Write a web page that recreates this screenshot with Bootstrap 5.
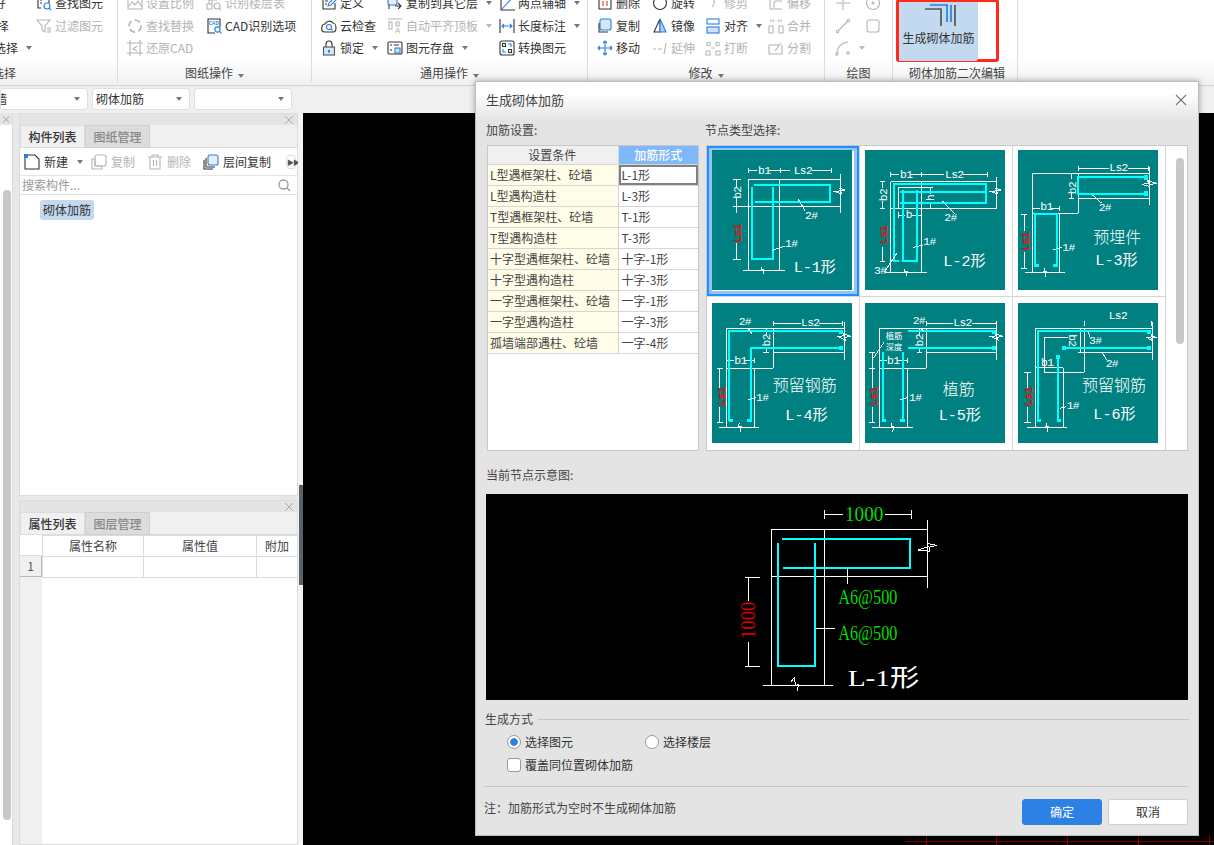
<!DOCTYPE html>
<html lang="zh-CN">
<head>
<meta charset="UTF-8">
<title>生成砌体加筋</title>
<link href="https://cdn.jsdelivr.net/npm/bootstrap@5.3.0/dist/css/bootstrap.min.css" rel="stylesheet">
<style>
html,body{height:845px;overflow:hidden}
body{font:12px/18px "Noto Sans CJK SC","Liberation Sans",sans-serif;color:#333;background:#e8e8e8;width:1214px;position:relative}
.ic{width:16px;height:16px;flex:none;fill:none;stroke:currentColor;stroke-width:1.1}
.arrow-d{display:inline-block;width:0;height:0;border:3.5px solid transparent;border-top:4px solid #777;border-bottom:0;margin-left:5px;flex:none}

/* ribbon */
.rb-bar{height:86px;background:linear-gradient(#fff 70%,#f0f0f0);border-bottom:1px solid #d5d5d5;overflow:hidden}
.rb-group{height:82px;border-right:1px solid #dcdcdc;flex:none;overflow:hidden}
.rb-rows{display:grid;grid-auto-rows:22.5px;margin-top:-8px;height:67.5px;grid-auto-flow:column;grid-template-rows:repeat(3,22.5px)}
.rb-item{display:flex;align-items:center;gap:3px;white-space:nowrap;color:#333}
.rb-off,.rb-off .ic{color:#b4b4b4}
.rb-off .arrow-d{border-top-color:#bbb}
.rb-title{margin-top:auto;height:18px;line-height:18px;text-align:center;color:#444;white-space:nowrap}
.g1{width:118px}.g1 .rb-rows{grid-template-columns:36px auto;margin-left:-6px}
.g1 .rb-rows>.rb-item:nth-child(n+4){margin-left:6px}
.g2{width:194px}.g2 .rb-rows{grid-template-columns:79px auto;padding-left:9px}
.g3{width:276px}.g3 .rb-rows{grid-template-columns:66px 112px auto;padding-left:9px}
.g4{width:237px}.g4 .rb-rows{grid-template-columns:55px 53px 63px auto;padding-left:9px}
.g5{width:68px}.g5 .rb-rows{grid-template-columns:30px auto;padding-left:10px}
.g6{width:125px;padding-left:3px}
.gen-frame{width:103px;height:63px;border:3px solid #ff2a1a;border-radius:3px;margin-top:-1px}
.gen-btn{width:79px;height:59px;background:#c3d9f0;border-radius:0 0 3px 0;text-align:center;color:#333;padding-top:2px}
.gen-btn svg{display:block;width:36px;height:24px;margin:0 auto 1px;fill:none;stroke-width:1.7}
.g6 .rb-title{text-align:left;padding-left:13px}
.g1 .rb-title{text-align:left;margin-left:-8px}

/* combos */
.combo-row{height:27px;background:#f0f0f0;padding-top:2px;gap:4px}
.combo{height:22px;width:98px;background:#fff;border:1px solid #e0e0e0;border-radius:3px;padding:0 7px 0 3px;flex:none}
.combo-first{width:88px;padding-left:0;overflow:hidden}
.combo-first span:first-child{margin-left:-6px}

/* left panels */
.main-area{height:732px}
.side-sliver{width:13px;background:#fff;border-right:1px solid #ddd;position:relative;flex:none}
.sliver-head{height:12px;background:#e6e6e6;color:#aaa;font-size:11px;line-height:12px;text-align:center}
.sliver-bar{position:absolute;left:3px;top:77px;width:8px;height:630px;background:#c8c8c8;border-radius:4px}
.side-col{width:279px;margin-left:6px;flex:none}
.dock{background:#fff;border:1px solid #dcdcdc}
.dock-top{height:383px}
.dock-bottom{height:345px;margin-top:4px}
.dock-head{height:11px;background:#e4e4e4;display:flex;justify-content:end;align-items:center;padding-right:4px;color:#aaa}
.dock-head svg{width:8px;height:8px;stroke:#aaa;fill:none}
.dock-tabs{height:23px;background:#f0f0f0;border-bottom:1px solid #dcdcdc;flex-wrap:nowrap}
.dock-tabs .nav-link{height:23px;width:65px;padding:0;text-align:center;line-height:21px;font-size:12px;color:#888;background:#dcdcdc;border:1px solid #cfcfcf;border-radius:0;font-weight:500}
.dock-tabs .nav-link.active{color:#333;background:#f0f0f0;border-color:#dcdcdc}
.dock-tools{height:28px;border-bottom:1px solid #e6e6e6;padding-left:4px;white-space:nowrap}
.dock-tools .rb-item{gap:4px}
.tool-gap{margin-left:12px}
.tool-gap-first{margin-left:8px}
.more-btn{width:10px;height:14px;margin-left:auto;margin-right:1px;border:1px solid #e0e0e0;border-radius:3px;font-size:7px;line-height:12px;text-align:center;color:#555;letter-spacing:-1px}
.search-row{height:19px;border-bottom:1px solid #e0e0e0;color:#999;padding:0 6px 0 2px}
.search-row svg{width:13px;height:13px;stroke:#999;fill:none;stroke-width:1.3}
.tree-chip{display:inline-block;margin:5px 0 0 20px;padding:0 3px;height:20px;line-height:20px;background:#c3d9f0;border-radius:3px}
.prop-wrap{position:relative;height:309px;align-items:flex-start}
.prop-side{width:22px;height:100%;background:#f0f0f0;flex:none}
.prop-table{width:255px;table-layout:fixed;margin:0;--bs-table-border-color:#dcdcdc;color:#444}
.prop-table th,.prop-table td{padding:0;height:21px;font-weight:400;text-align:center;font-size:12px;line-height:18px;border:1px solid #dcdcdc;vertical-align:middle}
.prop-c1{width:101px}.prop-c2{width:113px}.prop-c3{width:41px}
.prop-num{position:absolute;left:0;top:21px;width:22px;height:21px;line-height:20px;text-align:center;border-right:1px solid #bbb;border-bottom:1px solid #bbb;background:#f0f0f0;color:#555}
.prop-corner{position:absolute;left:0;top:0;width:22px;height:21px;background:#fff;border-bottom:1px solid #dcdcdc}
.dock-gap{width:5px;background:#f4f4f4;flex:none}
.cad-area{background:#000;flex:1;position:relative}
.split-handle{position:absolute;left:299px;top:485px;width:4px;height:100px;background:#5a6068}
.cad-grid{position:absolute;right:0;bottom:0;width:309px;height:10px;stroke:#8a0000;fill:none;shape-rendering:crispEdges}

/* dialog */
.dlg{position:absolute;left:475px;top:81px;width:724px;height:755px;background:#e4e4e4;border:1px solid #bdbdbd;box-shadow:0 0 6px rgba(0,0,0,.35)}
.dlg-head{height:39px;background:linear-gradient(#fff 30%,#e4e4e4);padding:0 11px 3px 10px;font-size:13px;color:#444}
.dlg-head svg{width:12px;height:12px;stroke:#777;fill:none;stroke-width:1.1}
.dlg-body{padding:0 10px 0 11px}
.lbl-row{height:24px;gap:7px;color:#444}
.lbl-row div:first-child{width:212px;margin-left:-1px}
.cfg-row{height:306px;gap:7px}
.cond-box{width:212px;height:306px;background:#fff;border:1px solid #c8c8c8;flex:none}
.cond-table{width:210px;table-layout:fixed;margin:0;border-collapse:collapse}
.cond-table th,.cond-table td{padding:0 3px;height:21px;font-size:12px;line-height:18px;border:1px solid #d6d6d6;font-weight:400;white-space:nowrap;vertical-align:middle;color:#444;background:#fff;box-shadow:none}
.cond-table tr>:first-child{border-left:0;width:130px;padding-left:2px}
.cond-table tr>:last-child{border-right:0}
.cond-table tr:first-child>*{border-top:0;height:18px;text-align:center;line-height:17px}
.cond-table th:first-child{background:#f0f0f0}
.cond-table th:last-child{background:#7fb8fb;color:#fff;font-weight:500}
.cond-table td:first-child{background:#fffde8}
.cond-table td.cell-on{box-shadow:inset 0 0 0 2px #808080}
.node-box{width:482px;height:306px;background:#fff;border:1px solid #c8c8c8;flex:none;position:relative}
.node-grid{display:grid;grid-template-columns:repeat(3,153px);grid-template-rows:151px 153px}
.node-cell{padding:4px 0 0 5px;border-right:1px solid #d6d6d6;border-bottom:1px solid #d6d6d6}
.node-grid .node-cell:nth-child(n+4){padding-top:6px;border-bottom:0}
.node-on{box-shadow:inset 0 0 0 2px #1e90ff,inset 0 0 0 5px #92c5f9}
.thumb{display:block;width:140px;height:140px;background:#008080}
.ln{stroke:#fff;stroke-width:3;fill:none;shape-rendering:crispEdges}
.rbr{stroke:#0ff;stroke-width:6;fill:none;shape-rendering:crispEdges}
.rbs{fill:#0ff;shape-rendering:crispEdges}
.tw{fill:#fff;font:34px "Liberation Mono","Noto Sans CJK SC",monospace;letter-spacing:-2px}
.tb{fill:#fff;font:46px "Liberation Mono","Noto Sans CJK SC",monospace}
.tc{fill:#fff;font:48px "Noto Sans CJK SC",sans-serif;font-weight:300}
.ts{fill:#fff;font:25px "Noto Sans CJK SC",sans-serif}
.tr{fill:#f00;font:bold 34px "Liberation Mono",monospace;letter-spacing:-2px}
.node-track{position:absolute;left:459px;top:0;width:21px;height:304px;background:#fff}
.node-thumbbar{position:absolute;left:10px;top:12px;width:8px;height:186px;background:#c8c8c8;border-radius:4px}
.cap-row{height:43px;padding-top:15px;color:#444;margin-left:-1px}
.draw-box{display:block;width:702px;height:206px;background:#000;margin-left:-1px}
.dr-w{stroke:#fff;stroke-width:3;fill:none;shape-rendering:crispEdges}
.dr-c{stroke:#0ff;stroke-width:6;fill:none;shape-rendering:crispEdges}
.dr-g{fill:#0d0;font:62px "Liberation Serif",serif}
.dr-g2{fill:#0d0;font:60px "Liberation Serif",serif}
.dr-r{fill:#d00;font:62px "Liberation Serif",serif}
.dr-t{fill:#fff;font:72px "Liberation Serif","Noto Sans CJK SC",serif}
.mode-head{margin-top:10px;height:18px;gap:5px;margin-left:-2px;color:#444}
.mode-head i{flex:1;height:1px;background:#c6c6c6;margin-right:-1px}
.mode-opt{height:18px;padding-left:20px;margin-top:5px;color:#333}
.mode-opt .form-check{margin:0;padding:0;min-height:0;display:flex;align-items:center;gap:4px;line-height:18px}
.mode-opt .form-check-input{float:none;margin:0;width:14px;height:14px;border:1px solid #999;flex:none}
.mode-opt .form-check-input:checked{background:#fff radial-gradient(circle,#2b7fe0 0 3.5px,transparent 4px);border-color:#999}
.mode-gap{width:72px}
.dlg-rule{height:1px;background:#c6c6c6;margin:12px 0 0 -3px}
.dlg-foot{margin:12px 0 0 -3px;align-items:start;color:#444}
.dlg-btn{width:80px;height:26px;padding:0;font-size:12px;border-radius:3px;line-height:24px}
.dlg-ok{background:#2e81e4;border:1px solid #2e81e4;color:#fff}
.dlg-no{background:#fff;border:1px solid #cfcfcf;color:#333;margin-left:6px}
.blue{color:#2b7fe0}
</style>
</head>
<body>
<svg width="0" height="0" class="position-absolute">
  <symbol id="i-find" viewBox="0 0 16 16"><path d="M5 13H2V2h11v6"/><path d="M4 5h2M4 8h2"/><circle cx="11" cy="11" r="3" stroke="#2b7fe0"/><path d="M13 13l2 2" stroke="#2b7fe0"/></symbol>
  <symbol id="i-filter" viewBox="0 0 16 16"><path d="M1 2h13L9 8v6L6 12V8z"/><path d="M11 10h4M11 12h4M11 14h4"/></symbol>
  <symbol id="i-ratio" viewBox="0 0 16 16"><path d="M1 14V3h14v11z"/><path d="M1 12l4-5 3 3 3-4 4 6"/></symbol>
  <symbol id="i-floor" viewBox="0 0 16 16"><path d="M1 14V9h5v5zM6 9V5h5M3 9V5h3"/><circle cx="11" cy="11" r="3"/><path d="M13 13l2 2"/></symbol>
  <symbol id="i-replace" viewBox="0 0 16 16"><circle cx="8" cy="8" r="6" stroke-width="1.6" stroke-dasharray="6 3"/></symbol>
  <symbol id="i-cadopt" viewBox="0 0 16 16"><path d="M9 15H2V1h12v8"/><text x="2.800" y="7" font-size="4.600" font-family="Liberation Sans" fill="#2b7fe0" stroke="none" font-weight="700">CAD</text><circle cx="11.500" cy="11.500" r="2.600" stroke="#2b7fe0"/><path d="M13.400 13.400l2 2" stroke="#2b7fe0"/></symbol>
  <symbol id="i-restore" viewBox="0 0 16 16"><path d="M3 0v16M13 0v16M0 3h16M0 13h16"/><path d="M10 6L6 9l4 2"/></symbol>
  <symbol id="i-define" viewBox="0 0 16 16"><path d="M14 8v6H2V2h7"/><path d="M4 6h3M4 9h2"/><path d="M7 11l1-3 6-6 2 2-6 6z" stroke="#2b7fe0"/></symbol>
  <symbol id="i-cloud" viewBox="0 0 16 16"><path d="M4 14C1 14 0 12 1 9c0-2 2-3 3-3 1-3 6-4 8-1 2 0 3 3 3 5 0 3-1 4-3 4z"/><circle cx="8" cy="9" r="2.500" stroke="#2b7fe0"/><path d="M10 11l1.500 1.500" stroke="#2b7fe0"/></symbol>
  <symbol id="i-lock" viewBox="0 0 16 16"><path d="M5 7V4a3 3 0 0 1 6 0v3"/><rect x="2.500" y="7" width="11" height="8" fill="#d3e5f8" stroke="#555"/><path d="M8 10v2.500" stroke="#2b7fe0" stroke-width="2"/></symbol>
  <symbol id="i-copyfloor" viewBox="0 0 16 16"><path d="M2 14V4a2 2 0 0 1 2-2h8"/><rect x="1" y="1" width="9" height="9" rx="2" stroke="#2b7fe0" fill="#e6f0fb"/><path d="M11 8l3 3-3 3M14 11H8"/></symbol>
  <symbol id="i-stack" viewBox="0 0 16 16"><path d="M3 4v9h9M1 6v9h9"/><rect x="5" y="1" width="10" height="10" rx="2" fill="#e6f0fb" stroke="#2b7fe0"/></symbol>
  <symbol id="i-copyoff" viewBox="0 0 16 16"><path d="M1 5h3v7h7v3H1z"/><rect x="4" y="1" width="11" height="11" rx="2"/></symbol>
  <symbol id="i-autoalign" viewBox="0 0 16 16"><path d="M1 1h14M2 4v7h3V4zM9 4v4h3V4z"/><text x="8" y="15" font-size="8" font-family="Liberation Sans" fill="currentColor" stroke="none">A</text></symbol>
  <symbol id="i-save" viewBox="0 0 16 16"><rect x="1" y="2" width="14" height="12" rx="1"/><path d="M3 5h2M7 5h5M3 10h2"/><rect x="8" y="8" width="5" height="5" fill="#cfe2f7" stroke="#2b7fe0"/></symbol>
  <symbol id="i-axis" viewBox="0 0 16 16"><path d="M2 1v14h14"/><path d="M3 14L13 3" stroke="#2b7fe0"/></symbol>
  <symbol id="i-dim" viewBox="0 0 16 16"><path d="M1 1v14M15 1v14"/><path d="M3 8h10M5 6L3 8l2 2M11 6l2 2-2 2" stroke="#2b7fe0"/></symbol>
  <symbol id="i-conv" viewBox="0 0 16 16"><rect x="1" y="1" width="14" height="14" rx="2"/><rect x="3.500" y="3.500" width="3" height="3"/><path d="M9 4h3v3M4 9v3h3" stroke="#2b7fe0"/><rect x="9.500" y="9.500" width="3" height="3"/></symbol>
  <symbol id="i-del" viewBox="0 0 16 16"><path d="M2 3h12v11H2z"/><path d="M6 6v5M10 6v5" stroke="#d33"/></symbol>
  <symbol id="i-rotate" viewBox="0 0 16 16"><circle cx="8" cy="8" r="6.500"/></symbol>
  <symbol id="i-copy" viewBox="0 0 16 16"><rect x="3" y="1" width="11" height="11" rx="2" fill="#d8e7f8" stroke="#2b7fe0"/><path d="M2 5v9h9"/></symbol>
  <symbol id="i-mirror" viewBox="0 0 16 16"><path d="M8 1L2 14h6z"/><path d="M8 1l6 13H8z" fill="#a9cdf3" stroke="#2b7fe0"/></symbol>
  <symbol id="i-move" viewBox="0 0 16 16"><path d="M8 1v14M1 8h14M6 3l2-2 2 2M6 13l2 2 2-2M3 6L1 8l2 2M13 6l2 2-2 2" stroke="#2b7fe0"/></symbol>
  <symbol id="i-trim" viewBox="0 0 16 16"><path d="M1 4h6M10 4h5M9 2v7M7 12l2-3"/></symbol>
  <symbol id="i-extend" viewBox="0 0 16 16"><path d="M1 9h3M6 9h4M14 3l-2 11"/></symbol>
  <symbol id="i-align" viewBox="0 0 16 16"><rect x="2" y="1" width="12" height="5" stroke="#2b7fe0"/><rect x="2" y="9" width="12" height="6" fill="#cfe2f7" stroke="#2b7fe0"/></symbol>
  <symbol id="i-break" viewBox="0 0 16 16"><circle cx="3.500" cy="4" r="1.800"/><circle cx="12.500" cy="4" r="1.800"/><path d="M1 15v-4h4v4zM11 15v-4h4v4zM6 8h4"/></symbol>
  <symbol id="i-offset" viewBox="0 0 16 16"><path d="M2 14V6a4 4 0 0 1 4-4h8M6 13V8a2 2 0 0 1 2-2h6"/><path d="M2 14h12"/></symbol>
  <symbol id="i-merge" viewBox="0 0 16 16"><path d="M3 1v3M13 1v3M5 2l1 2M11 2l-1 2"/><path d="M1 15V8h4v7zM11 15V8h4v7z"/></symbol>
  <symbol id="i-split" viewBox="0 0 16 16"><path d="M1 5h10M14 5v9H1V5"/><path d="M7 11l6-8"/></symbol>
  <symbol id="i-pt" viewBox="0 0 16 16"><path d="M8 1v5M8 10v5M1 8h5M10 8h5"/><circle cx="8" cy="8" r="1.200"/></symbol>
  <symbol id="i-circle" viewBox="0 0 16 16"><circle cx="8" cy="8" r="6.500"/><circle cx="8" cy="8" r="1"/></symbol>
  <symbol id="i-line" viewBox="0 0 16 16"><path d="M3 13L13 3"/><circle cx="2.500" cy="13.500" r="1.300"/><circle cx="13.500" cy="2.500" r="1.300"/></symbol>
  <symbol id="i-rect" viewBox="0 0 16 16"><rect x="2" y="2" width="12" height="12" rx="2"/></symbol>
  <symbol id="i-arc" viewBox="0 0 16 16"><path d="M2 14C2 7 6 3 13 2"/><circle cx="2" cy="14" r="1.200"/><circle cx="13" cy="13" r="1.200"/></symbol>
  <symbol id="i-new" viewBox="0 0 16 16"><path d="M4 1h7l4 4v10H1V4"/><rect x="0" y="0" width="4" height="4" fill="#2b7fe0" stroke="none"/></symbol>
  <symbol id="i-trash" viewBox="0 0 16 16"><path d="M1 3h14M5 3V1h6v2M3 3v12h10V3M6.500 6v6M9.500 6v6"/></symbol>
</svg>

<!-- ribbon -->
<div class="rb-bar d-flex">
  <div class="rb-group g1 d-flex flex-column">
    <div class="rb-rows">
      <div class="rb-item">好</div>
      <div class="rb-item"><span>&nbsp;择</span></div>
      <div class="rb-item">选择<span class="arrow-d"></span></div>
      <div class="rb-item"><svg class="ic"><use href="#i-find"/></svg>查找图元</div>
      <div class="rb-item rb-off"><svg class="ic"><use href="#i-filter"/></svg>过滤图元</div>
      <div class="rb-item"></div>
    </div>
    <div class="rb-title">选择</div>
  </div>
  <div class="rb-group g2 d-flex flex-column">
    <div class="rb-rows">
      <div class="rb-item rb-off"><svg class="ic"><use href="#i-ratio"/></svg>设置比例</div>
      <div class="rb-item rb-off"><svg class="ic"><use href="#i-replace"/></svg>查找替换</div>
      <div class="rb-item rb-off"><svg class="ic"><use href="#i-restore"/></svg>还原CAD</div>
      <div class="rb-item rb-off"><svg class="ic"><use href="#i-floor"/></svg>识别楼层表</div>
      <div class="rb-item"><svg class="ic"><use href="#i-cadopt"/></svg>CAD识别选项</div>
      <div class="rb-item"></div>
    </div>
    <div class="rb-title">图纸操作<span class="arrow-d"></span></div>
  </div>
  <div class="rb-group g3 d-flex flex-column">
    <div class="rb-rows">
      <div class="rb-item"><svg class="ic"><use href="#i-define"/></svg>定义</div>
      <div class="rb-item"><svg class="ic"><use href="#i-cloud"/></svg>云检查</div>
      <div class="rb-item"><svg class="ic"><use href="#i-lock"/></svg>锁定<span class="arrow-d"></span></div>
      <div class="rb-item"><svg class="ic"><use href="#i-copyfloor"/></svg>复制到其它层<span class="arrow-d"></span></div>
      <div class="rb-item rb-off"><svg class="ic"><use href="#i-autoalign"/></svg>自动平齐顶板<span class="arrow-d"></span></div>
      <div class="rb-item"><svg class="ic"><use href="#i-save"/></svg>图元存盘<span class="arrow-d"></span></div>
      <div class="rb-item"><svg class="ic"><use href="#i-axis"/></svg>两点辅轴<span class="arrow-d"></span></div>
      <div class="rb-item"><svg class="ic"><use href="#i-dim"/></svg>长度标注<span class="arrow-d"></span></div>
      <div class="rb-item"><svg class="ic"><use href="#i-conv"/></svg>转换图元</div>
    </div>
    <div class="rb-title">通用操作<span class="arrow-d"></span></div>
  </div>
  <div class="rb-group g4 d-flex flex-column">
    <div class="rb-rows">
      <div class="rb-item"><svg class="ic"><use href="#i-del"/></svg>删除</div>
      <div class="rb-item"><svg class="ic"><use href="#i-copy"/></svg>复制</div>
      <div class="rb-item"><svg class="ic blue"><use href="#i-move"/></svg>移动</div>
      <div class="rb-item"><svg class="ic"><use href="#i-rotate"/></svg>旋转</div>
      <div class="rb-item"><svg class="ic"><use href="#i-mirror"/></svg>镜像</div>
      <div class="rb-item rb-off"><svg class="ic"><use href="#i-extend"/></svg>延伸</div>
      <div class="rb-item rb-off"><svg class="ic"><use href="#i-trim"/></svg>修剪</div>
      <div class="rb-item"><svg class="ic"><use href="#i-align"/></svg>对齐<span class="arrow-d"></span></div>
      <div class="rb-item rb-off"><svg class="ic"><use href="#i-break"/></svg>打断</div>
      <div class="rb-item rb-off"><svg class="ic"><use href="#i-offset"/></svg>偏移</div>
      <div class="rb-item rb-off"><svg class="ic"><use href="#i-merge"/></svg>合并</div>
      <div class="rb-item rb-off"><svg class="ic"><use href="#i-split"/></svg>分割</div>
    </div>
    <div class="rb-title">修改<span class="arrow-d"></span></div>
  </div>
  <div class="rb-group g5 d-flex flex-column">
    <div class="rb-rows">
      <div class="rb-item rb-off"><svg class="ic"><use href="#i-pt"/></svg></div>
      <div class="rb-item rb-off"><svg class="ic"><use href="#i-line"/></svg></div>
      <div class="rb-item rb-off"><svg class="ic"><use href="#i-arc"/></svg><span class="arrow-d"></span></div>
      <div class="rb-item rb-off"><svg class="ic"><use href="#i-circle"/></svg></div>
      <div class="rb-item rb-off"><svg class="ic"><use href="#i-rect"/></svg></div>
      <div class="rb-item"></div>
    </div>
    <div class="rb-title">绘图</div>
  </div>
  <div class="rb-group g6 d-flex flex-column">
    <div class="gen-frame">
      <div class="gen-btn">
        <svg viewBox="0 0 36 24"><path d="M4 5h16v17" stroke="#555"/><path d="M9 1h17v17M30 1v17" stroke="#2b7fe0"/><path d="M34 1v21" stroke="#555"/></svg>
        生成砌体加筋
      </div>
    </div>
    <div class="rb-title">砌体加筋二次编辑</div>
  </div>
</div>

<!-- combo row -->
<div class="combo-row d-flex">
  <div class="combo combo-first d-flex align-items-center justify-content-between"><span>墙</span><span class="arrow-d"></span></div>
  <div class="combo d-flex align-items-center justify-content-between"><span>砌体加筋</span><span class="arrow-d"></span></div>
  <div class="combo d-flex align-items-center justify-content-end"><span class="arrow-d"></span></div>
</div>

<!-- main area -->
<div class="main-area d-flex">
  <div class="side-sliver">
    <div class="sliver-head">×</div>
    <div class="sliver-bar"></div>
  </div>
  <div class="side-col">
    <div class="dock dock-top">
      <div class="dock-head"><svg viewBox="0 0 8 8"><path d="M0 0l8 8M8 0L0 8"/></svg></div>
      <ul class="nav dock-tabs">
        <li class="nav-item"><a class="nav-link active" href="#">构件列表</a></li>
        <li class="nav-item"><a class="nav-link" href="#">图纸管理</a></li>
      </ul>
      <div class="dock-tools d-flex align-items-center">
        <div class="rb-item"><svg class="ic"><use href="#i-new"/></svg>新建<span class="arrow-d"></span></div>
        <div class="rb-item rb-off tool-gap-first"><svg class="ic"><use href="#i-copyoff"/></svg>复制</div>
        <div class="rb-item rb-off tool-gap"><svg class="ic"><use href="#i-trash"/></svg>删除</div>
        <div class="rb-item tool-gap"><svg class="ic"><use href="#i-stack"/></svg>层间复制</div>
        <div class="more-btn">▶▶</div>
      </div>
      <div class="search-row d-flex align-items-center justify-content-between">
        <span>搜索构件...</span>
        <svg viewBox="0 0 13 13"><circle cx="5.500" cy="5.500" r="4.500"/><path d="M9 9l3 3"/></svg>
      </div>
      <span class="tree-chip">砌体加筋</span>
    </div>
    <div class="dock dock-bottom">
      <div class="dock-head"><svg viewBox="0 0 8 8"><path d="M0 0l8 8M8 0L0 8"/></svg></div>
      <ul class="nav dock-tabs">
        <li class="nav-item"><a class="nav-link active" href="#">属性列表</a></li>
        <li class="nav-item"><a class="nav-link" href="#">图层管理</a></li>
      </ul>
      <div class="d-flex prop-wrap">
        <div class="prop-side"></div>
        <table class="table prop-table">
          <colgroup><col class="prop-c1"><col class="prop-c2"><col class="prop-c3"></colgroup>
          <tr><th>属性名称</th><th>属性值</th><th>附加</th></tr>
          <tr><td>&nbsp;</td><td></td><td></td></tr>
        </table>
        <div class="prop-corner"></div>
        <div class="prop-num">1</div>
      </div>
    </div>
  </div>
  <div class="dock-gap"></div>
  <div class="cad-area">
    <svg class="cad-grid" viewBox="0 0 309 10"><path d="M0 6h309M21 0v10M91 0v10M162 0v10M233 0v10M304 0v10"/></svg>
  </div>
</div>
<div class="split-handle"></div>

<!-- dialog -->
<div class="dlg">
  <div class="dlg-head d-flex align-items-center justify-content-between">
    <span>生成砌体加筋</span>
    <svg viewBox="0 0 12 12"><path d="M1 1l10 10M11 1L1 11"/></svg>
  </div>
  <div class="dlg-body">
    <div class="lbl-row d-flex"><div>加筋设置:</div><div>节点类型选择:</div></div>
    <div class="cfg-row d-flex">
      <div class="cond-box">
        <table class="table cond-table">
          <tr><th>设置条件</th><th>加筋形式</th></tr>
          <tr><td>L型遇框架柱、砼墙</td><td class="cell-on">L-1形</td></tr>
          <tr><td>L型遇构造柱</td><td>L-3形</td></tr>
          <tr><td>T型遇框架柱、砼墙</td><td>T-1形</td></tr>
          <tr><td>T型遇构造柱</td><td>T-3形</td></tr>
          <tr><td>十字型遇框架柱、砼墙</td><td>十字-1形</td></tr>
          <tr><td>十字型遇构造柱</td><td>十字-3形</td></tr>
          <tr><td>一字型遇框架柱、砼墙</td><td>一字-1形</td></tr>
          <tr><td>一字型遇构造柱</td><td>一字-3形</td></tr>
          <tr><td>孤墙端部遇柱、砼墙</td><td>一字-4形</td></tr>
        </table>
      </div>
      <div class="node-box">
        <div class="node-grid">
          <div class="node-cell node-on">
            <svg class="thumb" viewBox="36 30 420 420">
              <path class="ln" d="M146 84v16M240 84v16M395 84v16M146 92h26M208 92h62M335 92h60M146 118h276M422 103v117M100 200h322M146 118v274M238 118v274M130 392h125M110 118v26M110 172v46M110 310v48M100 118h22M100 200h22M100 358h22"/>
              <path class="ln" d="M406 155l16-3-4-8 18 6-14 3 2 8zM185 380l-2 10 8-1-2 13"/>
              <path class="rbr" d="M162 134h228v51H165M157 142v214h63V142"/>
              <path class="ln" d="M295 178l20 34M215 332l40-14"/>
              <text class="tw" x="174" y="102">b1</text><text class="tw" x="281" y="102">Ls2</text>
              <text class="tw" x="315" y="236">2#</text><text class="tw" x="255" y="320">1#</text>
              <text class="tw" text-anchor="middle" transform="rotate(-90 122 158)" x="122" y="158">b2</text>
              <text class="tr" text-anchor="middle" transform="rotate(-90 122 280)" x="122" y="280">Ls1</text>
              <text class="tb" x="281" y="396" textLength="127" lengthAdjust="spacingAndGlyphs">L-1形</text>
            </svg>
          </div>
          <div class="node-cell">
            <svg class="thumb" viewBox="495 30 420 420">
              <path class="ln" d="M572 95v16M665 95v16M862 95v16M572 103h26M632 103h100M790 103h72M572 125h318M890 110v95M572 205h318M572 125v273M665 125v273M595 142v63M595 142h100M690 142v20M690 186v19M682 142h16M682 205h16M595 225h20M636 225h29M595 217v16M555 398h125M548 125v20M548 182v24M548 320v45M540 125h16M540 205h16M540 365h16"/>
              <path class="ln" d="M874 155l16-3-4-8 18 6-14 3 2 8zM615 386l-2 10 8-1-2 13"/>
              <path class="rbr" d="M596 362h-14V133h276v22H600M858 155v35H600M610 150v212h40V150"/>
              <path class="ln" d="M592 338l-38 56M640 322l28-7M727 183l38 39"/>
              <text class="tw" x="600" y="113">b1</text><text class="tw" x="735" y="113">Ls2</text>
              <text class="tw" x="617" y="235">b</text>
              <text class="tw" text-anchor="middle" transform="rotate(-90 702 174)" x="702" y="174">h</text>
              <text class="tw" text-anchor="middle" transform="rotate(-90 562 165)" x="562" y="165">b2</text>
              <text class="tr" text-anchor="middle" transform="rotate(-90 562 285)" x="562" y="285">Ls1</text>
              <text class="tw" x="522" y="402">3#</text><text class="tw" x="670" y="316">1#</text><text class="tw" x="733" y="244">2#</text>
              <text class="tb" x="730" y="378" textLength="127" lengthAdjust="spacingAndGlyphs">L-2形</text>
            </svg>
          </div>
          <div class="node-cell">
            <svg class="thumb" viewBox="24 30 420 420">
              <path class="ln" d="M205 78v14M415 78v14M205 85h93M353 85h62M67 100h351M205 100v120M67 220h138M67 100v296M148 220v176M205 175h213M418 80v115M185 100v18M185 160v15M177 100h16M177 175h16M67 197v16M148 197v16M67 205h22M122 205h26M34 222h18M42 222v50M42 335v50M34 385h18M45 396h120"/>
              <path class="ln" d="M395 133l22-3-5-8 28 8-22 4 2 6zM104 384l-3 12 8-1-3 16"/>
              <path class="rbr" d="M413 110H205v52h208M75 380V222h67v158"/>
              <path class="rbs" d="M403 106h10v14h-10zM403 154h10v14h-10zM72 372h14v10H72zM129 372h14v10h-14z"/>
              <path class="ln" d="M248 165l27 25M130 330l25-8"/>
              <text class="tw" x="298" y="94">Ls2</text><text class="tw" x="91" y="210">b1</text>
              <text class="tw" text-anchor="middle" transform="rotate(-90 197 144)" x="197" y="144">b2</text>
              <text class="tr" text-anchor="middle" transform="rotate(-90 57 305)" x="57" y="305">Ls1</text>
              <text class="tw" x="266" y="212">2#</text><text class="tw" x="157" y="332">1#</text>
              <text class="tc" x="250" y="308">预埋件</text>
              <text class="tb" x="256" y="376" textLength="127" lengthAdjust="spacingAndGlyphs">L-3形</text>
            </svg>
          </div>
          <div class="node-cell">
            <svg class="thumb" viewBox="36 24 420 420">
              <path class="ln" d="M220 78v14M428 78v14M220 85h82M356 85h72M80 100h352M80 100v296M220 100v120M80 220h140M163 220v176M220 172h212M432 80v115M198 100v20M198 155v17M190 172h16M80 197h22M134 197h29M163 189v16M50 220h18M58 220v58M58 335v47M50 382h18M58 396h120"/>
              <path class="ln" d="M415 125l17-3-4-6 24 8-18 3 2 8zM118 384l-3 12 8-1-3 16"/>
              <path class="rbr" d="M430 108H88v270M430 160H153v218"/>
              <path class="rbs" d="M418 104h12v14h-12zM418 154h12v12h-12zM86 372h14v10H86zM142 372h14v10h-14z"/>
              <path class="ln" d="M145 100l10 16M143 315l25-8"/>
              <text class="tw" x="303" y="92">Ls2</text><text class="tw" x="116" y="91">2#</text>
              <text class="tw" x="103" y="206">b1</text><text class="tw" x="168" y="318">1#</text>
              <text class="tw" text-anchor="middle" transform="rotate(-90 210 136)" x="210" y="136">b2</text>
              <text class="tr" text-anchor="middle" transform="rotate(-90 74 305)" x="74" y="305">Ls1</text>
              <text class="tc" x="218" y="288">预留钢筋</text>
              <text class="tb" x="256" y="374" textLength="127" lengthAdjust="spacingAndGlyphs">L-4形</text>
            </svg>
          </div>
          <div class="node-cell">
            <svg class="thumb" viewBox="495 24 420 420">
              <path class="ln" d="M678 78v14M888 78v14M678 85h82M816 85h72M538 100h352M538 100v296M678 100v120M538 220h140M622 220v176M678 172h212M890 80v115M658 100v20M658 155v17M650 172h16M538 197h22M592 197h30M622 189v16M508 172h16M516 172v108M508 220h16M516 335v47M508 382h16M516 396h124"/>
              <path class="ln" d="M873 125l17-3-4-6 24 8-18 3 2 8zM576 384l-3 12 8-1-3 16M553 140l-33 50"/>
              <path class="rbr" d="M625 108h258M625 160h258M548 170v208M610 170v208"/>
              <path class="rbs" d="M876 104h12v14h-12zM876 154h12v12h-12zM545 372h14v10h-14zM600 372h14v10h-14z"/>
              <path class="ln" d="M662 100l10 10M600 315l25-8"/>
              <text class="tw" x="760" y="92">Ls2</text><text class="tw" x="638" y="86">2#</text>
              <text class="tw" x="561" y="206">b1</text><text class="tw" x="627" y="318">1#</text>
              <text class="tw" text-anchor="middle" transform="rotate(-90 670 136)" x="670" y="136">b2</text>
              <text class="tr" text-anchor="middle" transform="rotate(-90 532 305)" x="532" y="305">Ls1</text>
              <text class="ts" x="557" y="132">植筋</text><text class="ts" x="557" y="164">深度</text>
              <text class="tc" x="728" y="300">植筋</text>
              <text class="tb" x="716" y="374" textLength="127" lengthAdjust="spacingAndGlyphs">L-5形</text>
            </svg>
          </div>
          <div class="node-cell">
            <svg class="thumb" viewBox="24 24 420 420">
              <path class="ln" d="M223 78v14M424 78v14M77 100h350M77 100v296M223 100v132M103 232h120M103 128v104M103 128h70M77 218h83M160 218v178M205 173h222M427 80v115M212 100v70M42 232h20M52 232v48M52 335v47M42 382h20M50 396h122"/>
              <path class="ln" d="M412 128l15-3-4-6 14 8-12 3 2 8zM110 384l-3 12 8-1-3 16"/>
              <path class="rbr" d="M415 108H85v270M415 158H160M145 182v196"/>
              <path class="rbs" d="M410 104h12v14h-12zM410 152h12v12h-12zM80 372h14v10H80zM140 372h12v10h-12zM138 180h12v12h-12zM156 152h12v12h-12z"/>
              <path class="ln" d="M233 107l7 18M275 170l15 25M150 340l18-5"/>
              <text class="tw" x="296" y="73">Ls2</text>
              <text class="tw" x="93" y="213">b1</text>
              <text class="tw" text-anchor="middle" transform="rotate(90 176 136)" x="176" y="136">b2</text>
              <text class="tr" text-anchor="middle" transform="rotate(-90 67 305)" x="67" y="305">Ls1</text>
              <text class="tw" x="237" y="147">3#</text><text class="tw" x="287" y="217">2#</text><text class="tw" x="170" y="342">1#</text>
              <text class="tc" x="216" y="288">预留钢筋</text>
              <text class="tb" x="250" y="372" textLength="127" lengthAdjust="spacingAndGlyphs">L-6形</text>
            </svg>
          </div>
        </div>
        <div class="node-track"><div class="node-thumbbar"></div></div>
      </div>
    </div>
    <div class="cap-row">当前节点示意图:</div>
    <svg class="draw-box" viewBox="-702 -3 2106 618">
      <path class="dr-w" d="M314 45v28M574 45v28M314 58h55M495 58h79M155 103h467M155 103v469M314 103v469M155 244h467M622 75v203M130 572h208M75 247h45M75 514h45M85 247v72M85 441v73M382 220v48M285 400h60"/>
      <path class="dr-w" d="M595 165l30-10-4-10 30 6-24 6 2 12zM213 560l10-12 4 24 8-4-2 20"/>
      <path class="dr-c" d="M186 132h384v86H190M174 145v368h111V145"/>
      <text class="dr-g" x="375" y="78" textLength="115" lengthAdjust="spacingAndGlyphs">1000</text>
      <text class="dr-r" transform="rotate(-90 105 432)" x="105" y="432" textLength="112" lengthAdjust="spacingAndGlyphs">1000</text>
      <text class="dr-g2" x="355" y="326" textLength="177" lengthAdjust="spacingAndGlyphs">A6@500</text>
      <text class="dr-g2" x="355" y="434" textLength="177" lengthAdjust="spacingAndGlyphs">A6@500</text>
      <text class="dr-t" x="383" y="572" textLength="215" lengthAdjust="spacingAndGlyphs">L-1形</text>
    </svg>
    <div class="mode-head d-flex align-items-center"><span>生成方式</span><i></i></div>
    <div class="mode-opt d-flex">
      <div class="form-check"><input class="form-check-input" type="radio" name="genMode" id="modeEl" checked><label class="form-check-label" for="modeEl">选择图元</label></div>
      <div class="mode-gap"></div>
      <div class="form-check"><input class="form-check-input" type="radio" name="genMode" id="modeFl"><label class="form-check-label" for="modeFl">选择楼层</label></div>
    </div>
    <div class="mode-opt d-flex">
      <div class="form-check"><input class="form-check-input" type="checkbox" id="overlap"><label class="form-check-label" for="overlap">覆盖同位置砌体加筋</label></div>
    </div>
    <div class="dlg-rule"></div>
    <div class="dlg-foot d-flex justify-content-between">
      <div>注&#xFF1A;加筋形式为空时不生成砌体加筋</div>
      <div class="d-flex">
        <button class="btn dlg-btn dlg-ok" type="button">确定</button>
        <button class="btn dlg-btn dlg-no" type="button">取消</button>
      </div>
    </div>
  </div>
</div>
<script src="https://cdn.jsdelivr.net/npm/bootstrap@5.3.0/dist/js/bootstrap.bundle.min.js"></script>
</body>
</html>
